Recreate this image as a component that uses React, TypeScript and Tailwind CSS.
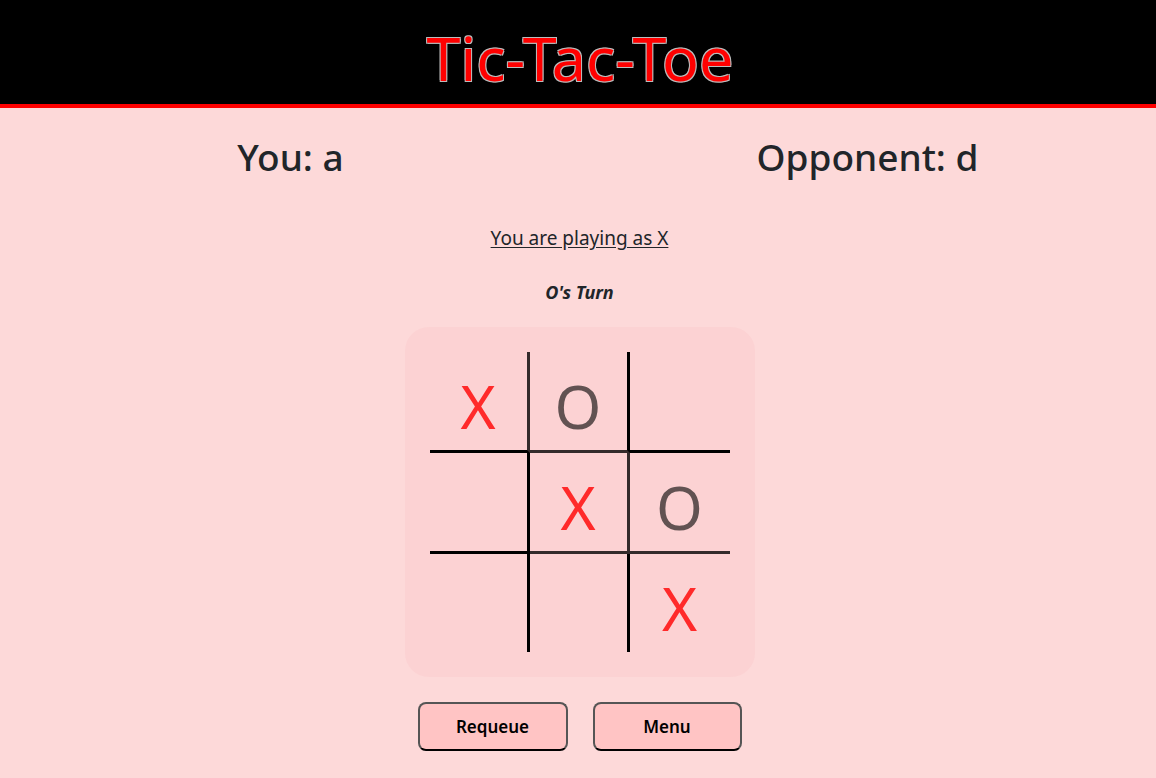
const board: string[] = ["X", "O", "", "", "X", "O", "", "", "X"];

// per-cell line segments, matched to the reference
const cellLines = [
  "border-r-[3px] border-b-[3px] border-r-[#342b2b] border-b-black",
  "border-r-[3px] border-b-[3px] border-r-black border-b-[#342b2b]",
  "border-b-[3px] border-b-black",
  "border-r-[3px] border-b-[3px] border-r-black border-b-black",
  "border-r-[3px] border-b-[3px] border-r-[#342b2b] border-b-[#342b2b]",
  "border-b-[3px] border-b-[#342b2b]",
  "border-r-[3px] border-r-black",
  "border-r-[3px] border-r-black",
  "",
];

export default function App() {
  return (
    <div className="min-h-[778px] bg-[#fdd9d9] text-[#212529] font-['Noto_Sans',sans-serif]">
      <header className="h-[108px] pl-[4px] bg-black border-b-4 border-[#ff0000] flex items-center justify-center">
        <h1 className="text-[61px] font-normal leading-none text-[#ff0000] pt-[10px] [text-shadow:-1px_-1px_0_#bbb,1px_-1px_0_#bbb,-1px_1px_0_#bbb,1px_1px_0_#bbb]">
          Tic-Tac-Toe
        </h1>
      </header>

      <div className="grid grid-cols-2 pt-[26px] pl-[2px]">
        <h2 className="text-center text-[37px] font-medium leading-[46px]">You: a</h2>
        <h2 className="text-center text-[37px] font-medium leading-[46px]">Opponent: d</h2>
      </div>

      <div className="flex flex-col items-center pl-[3px]">
        <p className="mt-[46px] text-[19px] leading-6 underline underline-offset-2">You are playing as X</p>
        <p className="mt-[30px] text-[18px] leading-6 font-bold italic">O's Turn</p>

        <div className="mt-[23px] w-[350px] h-[350px] rounded-[24px] bg-[#fcd2d3] p-[25px]">
          <div className="grid grid-cols-3 w-[300px] h-[300px]">
            {board.map((v, i) => (
              <div
                key={i}
                className={`flex items-center justify-center pt-[10px] text-[60px] leading-none ${cellLines[i]} ${
                  v === "X" ? "text-[#ff2a2a]" : "text-[#625252]"
                }`}
              >
                {v}
              </div>
            ))}
          </div>
        </div>

        <div className="mt-[25px] flex gap-[25px]">
          <button className="w-[150px] h-[49px] rounded-[8px] border-2 border-[#555] border-b-black bg-[#ffc4c4] text-[17px] font-semibold text-black">
            Requeue
          </button>
          <button className="w-[149px] h-[49px] rounded-[8px] border-2 border-[#555] border-b-black bg-[#ffc4c4] text-[17px] font-semibold text-black">
            Menu
          </button>
        </div>
      </div>
    </div>
  );
}
